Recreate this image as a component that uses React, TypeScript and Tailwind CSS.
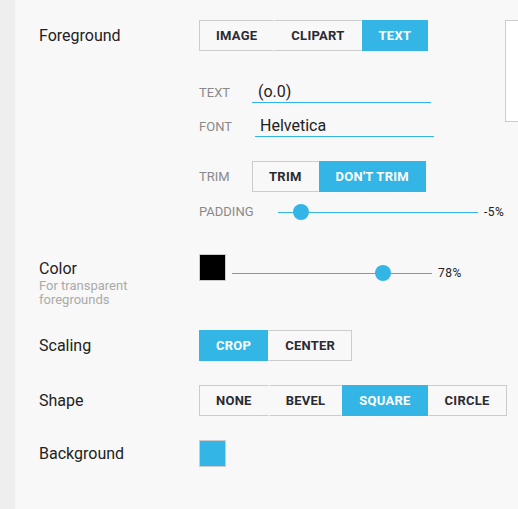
import React from 'react';

const BLUE = 'bg-[#33b5e5]';

const Segmented = ({ items, active }: { items: string[]; active: string }) => (
  <div className="flex h-[31px]">
    {items.map((it, i) => {
      const on = it === active;
      const first = i === 0;
      const last = i === items.length - 1;
      return (
        <div
          key={it}
          className={`flex items-center px-4 border text-[13px] font-bold tracking-[0.25px] ${
            on
              ? `${BLUE} border-[#33b5e5] text-white`
              : `text-[#2a2a33] border-y-[#cccccc] ${first ? 'border-l-[#cccccc]' : 'border-l-transparent'} ${
                  last ? 'border-r-[#cccccc]' : 'border-r-transparent'
                }`
          }`}
        >
          {it}
        </div>
      );
    })}
  </div>
);

const Slider = ({ pos, value, width }: { pos: number; value: string; width: number }) => (
  <div className="flex items-center h-4">
    <div className="relative h-4" style={{ width }}>
      <div className={`absolute left-0 right-0 top-[7.5px] h-px ${BLUE}`} />
      <div className={`absolute top-0 w-4 h-4 rounded-full ${BLUE}`} style={{ left: pos - 8 }} />
    </div>
    <span className="ml-[6px] text-[12px] leading-4 text-[#222] tracking-[0.5px]">{value}</span>
  </div>
);

const SubLabel = ({ children, w }: { children: React.ReactNode; w: string }) => (
  <span className={`${w} shrink-0 text-[13px] leading-4 text-[#8a8a8a]`}>{children}</span>
);

export default function App() {
  return (
    <div
      className="flex h-[509px] w-[518px] overflow-hidden bg-[#f8f8f8] text-[#222]"
      style={{ fontFamily: 'Roboto, "Liberation Sans", sans-serif' }}
    >
      <div className="w-[15px] shrink-0 bg-[#eeeeee]" />

      <div className="w-[490px] shrink-0 pl-6 pt-5">
        {/* Foreground */}
        <div className="flex">
          <div className="w-[160px] shrink-0 text-base leading-[31px]">Foreground</div>
          <div className="flex flex-col">
            <Segmented items={['IMAGE', 'CLIPART', 'TEXT']} active="TEXT" />

            <div className="mt-[31px] flex items-baseline">
              <SubLabel w="w-[53px]">TEXT</SubLabel>
              <div className="w-[179px] border-b border-[#33b5e5] pl-[6px] text-base leading-5">(o.0)</div>
            </div>

            <div className="mt-[13px] flex items-baseline">
              <SubLabel w="w-[56px]">FONT</SubLabel>
              <div className="w-[179px] border-b border-[#33b5e5] pl-[5px] text-base leading-5">Helvetica</div>
            </div>

            <div className="mt-6 flex items-center">
              <SubLabel w="w-[53px]">TRIM</SubLabel>
              <Segmented items={['TRIM', "DON'T TRIM"]} active="DON'T TRIM" />
            </div>

            <div className="mt-3 flex items-center">
              <SubLabel w="w-[79px]">PADDING</SubLabel>
              <Slider pos={23} value="-5%" width={200} />
            </div>
          </div>
        </div>

        {/* Color */}
        <div className="mt-[34px] flex">
          <div className="w-[160px] shrink-0">
            <div className="mt-[5px] text-base leading-5">Color</div>
            <div className="text-[13px] leading-[14px] text-[#aaaaaa]">
              For transparent
              <br />
              foregrounds
            </div>
          </div>
          <div className="flex items-start">
            <div className="h-[27px] w-[27px] border border-[#cccccc] bg-black" />
            <div className="ml-[6px] mt-[11px]">
              <Slider pos={151} value="78%" width={200} />
            </div>
          </div>
        </div>

        {/* Scaling */}
        <div className="mt-[23px] flex">
          <div className="w-[160px] shrink-0 text-base leading-[31px]">Scaling</div>
          <Segmented items={['CROP', 'CENTER']} active="CROP" />
        </div>

        {/* Shape */}
        <div className="mt-6 flex">
          <div className="w-[160px] shrink-0 text-base leading-[31px]">Shape</div>
          <Segmented items={['NONE', 'BEVEL', 'SQUARE', 'CIRCLE']} active="SQUARE" />
        </div>

        {/* Background */}
        <div className="mt-6 flex">
          <div className="w-[160px] shrink-0 text-base leading-[27px]">Background</div>
          <div className={`h-[27px] w-[27px] border border-[#cccccc] ${BLUE}`} />
        </div>
      </div>

      <div className="mt-5 h-[102px] w-[200px] shrink-0 border border-[#cccccc] bg-white" />
    </div>
  );
}
